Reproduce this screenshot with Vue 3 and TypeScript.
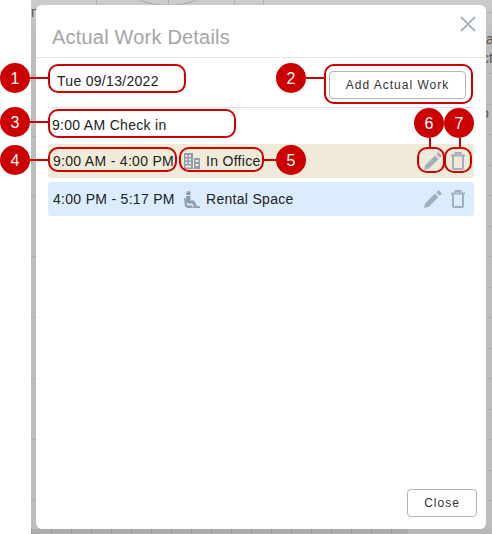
<script setup lang="ts">
type Callout = {
  n: number;
  cx: number;
  cy: number;
  box: [number, number, number, number];
  line: [number, number, number, number];
};

// numbered markers drawn over the dialog
const callouts: Callout[] = [
  { n: 1, cx: 15, cy: 78, box: [49, 65, 136, 27], line: [30, 78, 49, 78] },
  { n: 2, cx: 291, cy: 78, box: [325, 65, 147, 38], line: [306, 78, 325, 78] },
  { n: 3, cx: 15, cy: 122, box: [49, 110, 186, 27], line: [30, 122, 49, 122] },
  { n: 4, cx: 15, cy: 160, box: [49, 148, 127, 23], line: [30, 160, 49, 160] },
  { n: 5, cx: 291, cy: 160, box: [180, 148, 83, 23], line: [263, 160, 276, 160] },
  { n: 6, cx: 429, cy: 123, box: [418, 148, 26, 24], line: [430, 138, 430, 148] },
  { n: 7, cx: 459, cy: 123, box: [445, 148, 26, 24], line: [460, 138, 460, 148] },
];

// bits of the page behind the dialog that show in the strips around it
const leftLines = [75, 136, 196, 256, 317, 378, 439, 500];
const leftDots = [105, 166, 226, 287, 348, 409, 470];
const rightLines = [12, 43, 73, 104, 134, 165, 195, 226, 256, 287, 317, 348, 378, 409, 439, 470, 500];
</script>

<template>
  <div class="page">
    <div class="backdrop">
      <div class="bg-line v" style="left: 65px"></div>
      <div class="bg-line v" style="left: 137px"></div>
      <div class="bg-line v" style="left: 203px"></div>
      <div class="bg-line v" style="left: 232px"></div>
      <div v-for="y in leftLines" :key="y" class="bg-line left" :style="{ top: y + 'px' }"></div>
      <div v-for="y in leftDots" :key="y" class="bg-dot" :style="{ top: y + 'px' }"></div>
      <div v-for="y in rightLines" :key="y" class="bg-line right" :style="{ top: y + 'px' }"></div>
      <div class="bg-bottom"></div>
      <div class="bg-text left-n">n</div>
      <div class="bg-text" style="left: 455px; top: 31px">a</div>
      <div class="bg-text" style="left: 451px; top: 50px">ct</div>
      <div class="bg-text" style="left: 450px; top: 105px">o</div>
      <div class="bg-arc"></div>
      <div class="dialog">
        <button class="x" aria-label="Close">
          <svg width="16" height="16" viewBox="0 0 16 16">
            <path d="M1 1 15 15M15 1 1 15" stroke="#a9b6c2" stroke-width="2" fill="none" />
          </svg>
        </button>
        <h1 class="title">Actual Work Details</h1>
        <div class="body">
          <div class="date-row">
            <span class="date">Tue 09/13/2022</span>
            <button class="btn add">Add Actual Work</button>
          </div>
          <div class="checkin">9:00 AM Check in</div>
          <div class="work office">
            <span class="time">9:00 AM - 4:00 PM</span>
            <svg class="kind" width="16" height="16" viewBox="0 0 16 16" fill="#8f9eaa">
              <path d="M0 0h9v16H0zM1.500 2v2h2V2zM5 2v2h2V2zM1.500 5.500v2h2v-2zM5 5.500v2h2v-2zM1.500 9v2h2V9zM5 9v2h2V9zM1.500 12.500v2h5.500v-2z" fill-rule="evenodd" />
              <path d="M10 5h6v11h-6zM11.500 7v2h3V7zM11.500 11v2h3v-2z" fill-rule="evenodd" />
            </svg>
            <span class="place">In Office</span>
            <span class="actions">
              <svg width="18" height="18" viewBox="0 0 18 18" fill="#a3b0bb">
                <path d="M0 18l1.200-4.800L11 3.400l3.600 3.600L4.800 16.800zM12.200 2.200 13.700.7a1 1 0 0 1 1.400 0l2.200 2.200a1 1 0 0 1 0 1.400l-1.500 1.500z" />
              </svg>
              <svg width="14" height="18" viewBox="0 0 14 18" fill="none" stroke="#a3b0bb" stroke-width="2">
                <path d="M0 3.500h14M4.500 3V1h5v2M2 4v12a1 1 0 0 0 1 1h8a1 1 0 0 0 1-1V4" />
              </svg>
            </span>
          </div>
          <div class="work rental">
            <span class="time">4:00 PM - 5:17 PM</span>
            <svg class="kind" width="16" height="17" viewBox="0 0 16 17" fill="#8f9eaa">
              <circle cx="4.500" cy="2.200" r="2.200" />
              <path d="M2 5h4.500v4.500h3.500l3.500 6h-3L8 12.500H4A2 2 0 0 1 2 10.500z" />
              <path d="M0 7h1.500l.7 5a3 3 0 0 0 3 2.500H8l1 2.500H4.500A3.800 3.800 0 0 1 .7 14zM9 15.200h7V17H9z" />
            </svg>
            <span class="place">Rental Space</span>
            <span class="actions">
              <svg width="18" height="18" viewBox="0 0 18 18" fill="#a3b0bb">
                <path d="M0 18l1.200-4.800L11 3.400l3.600 3.600L4.800 16.800zM12.200 2.200 13.700.7a1 1 0 0 1 1.400 0l2.200 2.200a1 1 0 0 1 0 1.400l-1.500 1.500z" />
              </svg>
              <svg width="14" height="18" viewBox="0 0 14 18" fill="none" stroke="#a3b0bb" stroke-width="2">
                <path d="M0 3.500h14M4.500 3V1h5v2M2 4v12a1 1 0 0 0 1 1h8a1 1 0 0 0 1-1V4" />
              </svg>
            </span>
          </div>
        </div>
        <div class="footer">
          <button class="btn close">Close</button>
        </div>
      </div>
    </div>

    <svg class="marks" width="492" height="534" viewBox="0 0 492 534">
      <g v-for="c in callouts" :key="c.n">
        <rect :x="c.box[0]" :y="c.box[1]" :width="c.box[2]" :height="c.box[3]" rx="9" fill="none" stroke="#cc0000" stroke-width="2" />
        <line :x1="c.line[0]" :y1="c.line[1]" :x2="c.line[2]" :y2="c.line[3]" stroke="#cc0000" stroke-width="2" />
        <circle :cx="c.cx" :cy="c.cy" r="15" fill="#cc0000" />
        <text :x="c.cx" :y="c.cy + 6" text-anchor="middle" class="mark-num">{{ c.n }}</text>
      </g>
    </svg>
  </div>
</template>

<style>
body {
  margin: 0;
  background: #fff;
}
</style>

<style scoped>
.page {
  position: relative;
  width: 492px;
  height: 534px;
  overflow: hidden;
  font-family: "Liberation Sans", Arial, sans-serif;
  color: #222;
}

.backdrop {
  position: relative;
  box-sizing: border-box;
  width: 461px;
  height: 534px;
  margin-left: 31px;
  padding: 5px 6px 5px 5px;
  background: linear-gradient(to bottom, #cccccc, #bdbdbd 40px);
  overflow: hidden;
}

.bg-line {
  position: absolute;
  background: #a9afb5;
}
.bg-line.v {
  top: 0;
  width: 1px;
  height: 5px;
}
.bg-line.left {
  left: 0;
  width: 5px;
  height: 1px;
}
.bg-line.right {
  right: 0;
  width: 6px;
  height: 1px;
}
.bg-dot {
  position: absolute;
  left: 3px;
  width: 1px;
  height: 1px;
  background: #a9afb5;
}

/* strip of the calendar grid under the dialog */
.bg-bottom {
  position: absolute;
  left: 0;
  right: 0;
  bottom: 0;
  height: 5px;
  background: repeating-linear-gradient(to right, #949ba1 0 1px, #acacac 1px 20px) 0 0 / 377px 100% no-repeat,
    #b8b8b8;
}

.bg-text {
  position: absolute;
  font-size: 14px;
  line-height: 16px;
  color: #555;
}
.left-n {
  top: 4px;
  left: 0;
}

.bg-arc {
  position: absolute;
  top: -34px;
  left: 97px;
  width: 78px;
  height: 38px;
  border: 1px solid #a9afb5;
  border-radius: 50%;
}

.dialog {
  position: relative;
  display: flex;
  flex-direction: column;
  box-sizing: border-box;
  height: 524px;
  background: #fff;
  border-radius: 6px;
}

.x {
  position: absolute;
  top: 11px;
  right: 10px;
  padding: 0;
  border: 0;
  background: none;
  line-height: 0;
}

.title {
  height: 53px;
  margin: 0;
  padding: 20px 0 0 16px;
  box-sizing: border-box;
  border-bottom: 1px solid #e2e2e2;
  font-size: 20px;
  line-height: 24px;
  font-weight: 400;
  letter-spacing: 0.2px;
  color: #a5a5a5;
}

.body {
  flex: 1;
  padding: 0 12px;
}

.date-row {
  display: flex;
  align-items: center;
  justify-content: space-between;
  height: 49px;
  padding: 0 8px 0 9px;
  border-bottom: 1px solid #e2e2e2;
  font-size: 14px;
  letter-spacing: 0.3px;
}
.date {
  margin-top: -4px;
}

.btn {
  box-sizing: border-box;
  background: #fff;
  border: 1px solid #b5b5b5;
  border-radius: 4px;
  font-family: inherit;
  font-size: 12px;
  letter-spacing: 1px;
  color: #333;
}

.add {
  width: 137px;
  height: 28px;
  margin-top: 4px;
}

.checkin {
  height: 36px;
  padding-left: 4px;
  font-size: 14px;
  line-height: 34px;
  letter-spacing: 0.3px;
}

.work {
  display: flex;
  align-items: center;
  height: 34px;
  margin-bottom: 4px;
  padding: 0 9px 0 5px;
  border-radius: 3px;
  font-size: 14px;
  letter-spacing: 0.3px;
}
.office {
  background: #f0ead8;
}
.rental {
  background: #dbedfd;
}

.time {
  width: 131px;
}
.kind {
  margin-right: 6px;
}

.actions {
  display: flex;
  align-items: center;
  gap: 9px;
  margin-left: auto;
}

.footer {
  display: flex;
  justify-content: flex-end;
  padding: 0 9px 12px 0;
}
.close {
  width: 70px;
  height: 28px;
}

.marks {
  position: absolute;
  top: 0;
  left: 0;
}
.mark-num {
  font-size: 16px;
  fill: #fff;
}
</style>
